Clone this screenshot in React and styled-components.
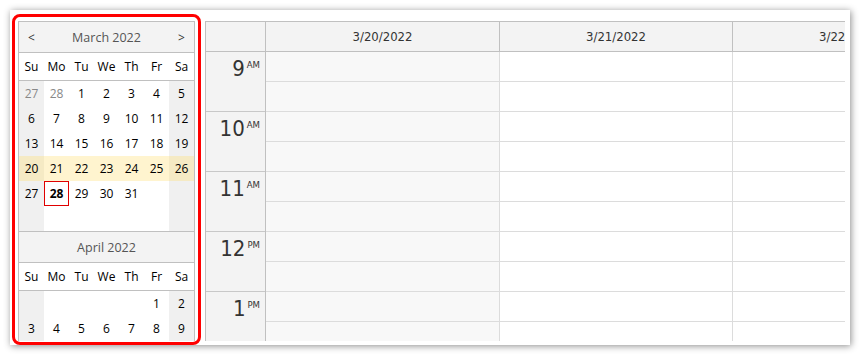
import React from 'react';
import styled, { createGlobalStyle } from 'styled-components';

const Global = createGlobalStyle`
  html, body { margin: 0; padding: 0; background: #ffffff; }
  body { width: 860px; height: 356px; overflow: hidden; }
`;

const Frame = styled.div`
  margin: 10px 0 0 10px;
  width: 840px;
  height: 335px;
  box-sizing: border-box;
  background: #ffffff;
  box-shadow: 1px 1px 7px rgba(0, 0, 0, 0.45);
  display: flex;
  align-items: flex-start;
  padding: 4px 0 0 2px;
`;

const Highlight = styled.div`
  width: 189px;
  height: 331px;
  box-sizing: border-box;
  border: 3px solid #ff0000;
  border-radius: 8px;
  padding: 4px 3px 0 3px;
  overflow: hidden;
  flex: none;
`;

const Navigator = styled.div`
  width: 177px;
  box-sizing: border-box;
  border: 1px solid #c0c0c0;
  border-bottom: none;
  font-family: "Open Sans", "Noto Sans", sans-serif;
  font-size: 12px;
  color: #000;
`;

const MonthTitle = styled.div`
  display: flex;
  align-items: center;
  height: 30px;
  background: #f3f3f3;
  border-top: ${p => (p.$first ? 'none' : '1px solid #c0c0c0')};
  border-bottom: 1px solid #c0c0c0;
  color: #555;
  font-size: 12.5px;
`;

const NavArrow = styled.div`
  width: 25px;
  text-align: center;
  color: #333;
  font-size: 12px;
`;

const TitleText = styled.div`
  flex: 1;
  text-align: center;
`;

const Grid = styled.div`
  display: grid;
  grid-template-columns: repeat(7, 25px);
`;

const DayNames = styled(Grid)`
  height: 27px;
  border-bottom: 1px solid #c0c0c0;
  align-items: center;
  text-align: center;
`;

const DayCell = styled.div`
  height: 25px;
  box-sizing: border-box;
  display: flex;
  align-items: center;
  justify-content: center;
  background: ${p =>
    p.$selected ? (p.$weekend ? '#f5eac4' : '#fff4cf') : p.$weekend ? '#f0f0f0' : '#ffffff'};
  color: ${p => (p.$other ? '#888' : '#000')};
  font-weight: ${p => (p.$today ? 700 : 400)};
  border: ${p => (p.$today ? '1px solid #e00000' : 'none')};
`;

const Calendar = styled.div`
  margin: 7px 0 0 4px;
  width: 640px;
  height: 320px;
  box-sizing: border-box;
  border-left: 1px solid #c0c0c0;
  border-top: 1px solid #c0c0c0;
  overflow: hidden;
  display: flex;
  flex-direction: column;
  font-family: "DejaVu Sans Condensed", "DejaVu Sans", sans-serif;
  color: #333;
  flex: none;
`;

const HeaderRow = styled.div`
  display: flex;
  flex: none;
  height: 30px;
  box-sizing: border-box;
  border-bottom: 1px solid #c0c0c0;
  background: #f3f3f3;
`;

const HeaderCell = styled.div`
  flex: none;
  width: ${p => p.$w}px;
  box-sizing: border-box;
  border-right: 1px solid #c0c0c0;
  display: flex;
  align-items: center;
  justify-content: center;
  font-size: 13px;
  white-space: nowrap;
`;

const Body = styled.div`
  display: flex;
  flex: none;
`;

const TimeColumn = styled.div`
  flex: none;
  width: 60px;
  box-sizing: border-box;
  border-right: 1px solid #c0c0c0;
  background: #f3f3f3;
`;

const HourCell = styled.div`
  height: 60px;
  box-sizing: border-box;
  border-bottom: 1px solid #c8c8c8;
  display: flex;
  justify-content: flex-end;
  align-items: flex-start;
  padding: 6px 5px 0 0;
  gap: 2px;
`;

const HourNum = styled.span`
  font-size: 22px;
  line-height: 22px;
`;

const AmPm = styled.span`
  font-size: 9.5px;
  line-height: 10px;
  margin-top: 2px;
`;

const DayColumn = styled.div`
  flex: none;
  width: ${p => p.$w}px;
  box-sizing: border-box;
  border-right: 1px solid #dcdcdc;
  background: ${p => (p.$weekend ? '#f8f8f8' : '#ffffff')};
`;

const Slot = styled.div`
  height: 30px;
  box-sizing: border-box;
  border-bottom: 1px solid #dcdcdc;
`;

const NAMES = ['Su', 'Mo', 'Tu', 'We', 'Th', 'Fr', 'Sa'];

const march = [
  [{ d: 27, o: 1 }, { d: 28, o: 1 }, { d: 1 }, { d: 2 }, { d: 3 }, { d: 4 }, { d: 5 }],
  [6, 7, 8, 9, 10, 11, 12].map(d => ({ d })),
  [13, 14, 15, 16, 17, 18, 19].map(d => ({ d })),
  [20, 21, 22, 23, 24, 25, 26].map(d => ({ d, s: 1 })),
  [{ d: 27 }, { d: 28, t: 1 }, { d: 29 }, { d: 30 }, { d: 31 }, {}, {}],
  [{}, {}, {}, {}, {}, {}, {}],
];

const april = [
  [{}, {}, {}, {}, {}, { d: 1 }, { d: 2 }],
  [3, 4, 5, 6, 7, 8, 9].map(d => ({ d })),
];

function Month({ title, weeks, first, arrows }) {
  return (
    <>
      <MonthTitle $first={first}>
        <NavArrow>{arrows ? '<' : ''}</NavArrow>
        <TitleText>{title}</TitleText>
        <NavArrow>{arrows ? '>' : ''}</NavArrow>
      </MonthTitle>
      <DayNames>
        {NAMES.map(n => (
          <div key={n}>{n}</div>
        ))}
      </DayNames>
      <Grid>
        {weeks.flatMap((w, wi) =>
          w.map((c, ci) => (
            <DayCell
              key={`${wi}-${ci}`}
              $weekend={ci === 0 || ci === 6}
              $selected={!!c.s}
              $other={!!c.o}
              $today={!!c.t}
            >
              {c.d ?? ''}
            </DayCell>
          ))
        )}
      </Grid>
    </>
  );
}

const hours = [
  ['9', 'AM'],
  ['10', 'AM'],
  ['11', 'AM'],
  ['12', 'PM'],
  ['1', 'PM'],
];

const days = [
  { label: '3/20/2022', w: 234, weekend: true },
  { label: '3/21/2022', w: 233 },
  { label: '3/22/2022', w: 233 },
];

export default function App() {
  return (
    <>
      <Global />
      <Frame>
        <Highlight>
          <Navigator>
            <Month title="March 2022" weeks={march} first arrows />
            <Month title="April 2022" weeks={april} />
          </Navigator>
        </Highlight>
        <Calendar>
          <HeaderRow>
            <HeaderCell $w={60} />
            {days.map(d => (
              <HeaderCell key={d.label} $w={d.w}>
                {d.label}
              </HeaderCell>
            ))}
          </HeaderRow>
          <Body>
            <TimeColumn>
              {hours.map(([h, a]) => (
                <HourCell key={h}>
                  <HourNum>{h}</HourNum>
                  <AmPm>{a}</AmPm>
                </HourCell>
              ))}
            </TimeColumn>
            {days.map(d => (
              <DayColumn key={d.label} $w={d.w} $weekend={d.weekend}>
                {Array.from({ length: 10 }).map((_, i) => (
                  <Slot key={i} />
                ))}
              </DayColumn>
            ))}
          </Body>
        </Calendar>
      </Frame>
    </>
  );
}
